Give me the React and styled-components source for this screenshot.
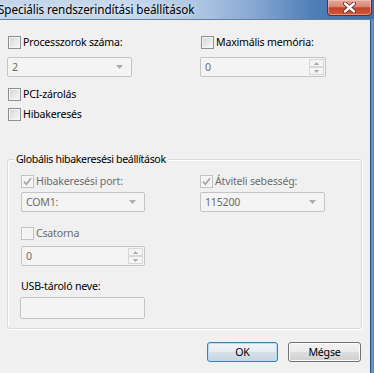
import React from 'react'
import styled, { createGlobalStyle } from 'styled-components'

const GlobalStyle = createGlobalStyle`
  html, body { margin: 0; padding: 0; background: #f0f0f0; }
  body {
    font-family: "Noto Sans", "Open Sans", sans-serif;
    font-size: 10.6px;
    letter-spacing: -0.2px;
    color: #000;
  }
`

const Check = ({ checked, disabled, children, indent }) => (
    <CheckRow $indent={indent} $disabled={disabled}>
        <Box $disabled={disabled}>
            {checked && (
                <svg width="9" height="9" viewBox="0 0 9 9">
                    <path d="M1 4.6 L3.4 7.2 L8 1.2" fill="none" stroke="#a2a2a2" strokeWidth="1.6" />
                </svg>
            )}
        </Box>
        {children}
    </CheckRow>
)

const Combo = ({ value, width }) => (
    <Field $width={width}>
        <span>{value}</span>
        <svg width="7" height="4" viewBox="0 0 7 4">
            <path d="M0 0 H7 L3.5 4 Z" fill="#acacac" />
        </svg>
    </Field>
)

const Spin = ({ value, width }) => (
    <Field $width={width} $spin>
        <span>{value}</span>
        <SpinBtns>
            <SpinBtn>
                <svg width="5" height="3" viewBox="0 0 5 3"><path d="M0 3 H5 L2.5 0 Z" fill="#a8a8a8" /></svg>
            </SpinBtn>
            <SpinBtn>
                <svg width="5" height="3" viewBox="0 0 5 3"><path d="M0 0 H5 L2.5 3 Z" fill="#a8a8a8" /></svg>
            </SpinBtn>
        </SpinBtns>
    </Field>
)

const App = () => {
    return (
        <Window>
            <GlobalStyle />
            <TitleBar>
                <Title>Speciális rendszerindítási beállítások</Title>
                <CloseBtn>
                    <svg width="13" height="11" viewBox="0 0 13 11">
                        <path d="M2 1.5 L11 9.5 M11 1.5 L2 9.5" stroke="#5b2218" strokeWidth="4" strokeLinecap="round" />
                        <path d="M2 1.5 L11 9.5 M11 1.5 L2 9.5" stroke="#ffffff" strokeWidth="2.4" strokeLinecap="round" />
                    </svg>
                </CloseBtn>
            </TitleBar>
            <Body>
                <Client>
                    <Columns>
                        <Col>
                            <Check indent={1}>Processzorok száma:</Check>
                            <Combo value="2" width={125} />
                        </Col>
                        <Col>
                            <Check indent={1}>Maximális memória:</Check>
                            <Spin value="0" width={126} />
                        </Col>
                    </Columns>
                    <Stack>
                        <Check indent={1}>PCI-zárolás</Check>
                        <Check indent={1}>Hibakeresés</Check>
                    </Stack>

                    <Group>
                        <Legend>Globális hibakeresési beállítások</Legend>
                        <GroupColumns>
                            <GroupCol>
                                <Check checked disabled>Hibakeresési port:</Check>
                                <Combo value="COM1:" width={124} />
                            </GroupCol>
                            <GroupCol>
                                <Check checked disabled>Átviteli sebesség:</Check>
                                <Combo value="115200" width={125} />
                            </GroupCol>
                        </GroupColumns>
                        <ChannelBlock>
                            <Check disabled>Csatorna</Check>
                            <Spin value="0" width={124} />
                        </ChannelBlock>
                        <Label>USB-tároló neve:</Label>
                        <TextBox />
                    </Group>

                    <Buttons>
                        <Button $default>OK</Button>
                        <Button>Mégse</Button>
                    </Buttons>
                </Client>
                <Frame />
            </Body>
        </Window>
    )
}

const Window = styled.div`
    width: 374px;
    height: 373px;
    display: flex;
    flex-direction: column;
    overflow: hidden;
    background: #f0f0f0;
`
const TitleBar = styled.div`
    height: 19px;
    flex: none;
    display: flex;
    align-items: flex-start;
    border-bottom: 1px solid #62809f;
    background: linear-gradient(to right, #c3d5ea 0%, #c6d8ec 35%, #a9c3e2 55%, #7fa3d0 70%, #4f7db6 84%, #416fa8 100%);
`
const Title = styled.div`
    flex: 1;
    margin-left: -2px;
    margin-top: 2px;
    font-size: 11.7px;
    letter-spacing: -0.1px;
    line-height: 15px;
    white-space: nowrap;
    text-shadow: 0 0 6px rgba(255, 255, 255, 0.85);
`
const CloseBtn = styled.div`
    width: 45px;
    height: 16px;
    margin-right: 2px;
    box-sizing: border-box;
    border: 1px solid #6e2c22;
    border-top: none;
    border-radius: 0 0 4px 4px;
    background: linear-gradient(#e5a99d 0%, #d98674 45%, #c0422c 52%, #cf5a3c 100%);
    box-shadow: inset 0 0 0 1px rgba(255, 210, 200, 0.45);
    display: flex;
    align-items: center;
    justify-content: center;
`
const Body = styled.div`
    flex: 1;
    display: flex;
`
const Client = styled.div`
    flex: 1;
    display: flex;
    flex-direction: column;
    padding: 15px 0 0 7px;
`
const Frame = styled.div`
    width: 4px;
    flex: none;
    background: linear-gradient(to right, #24507f 0 1px, #5f8fc6 1px, #6b9ad0 3px, #4a79b2 4px);
`
const Columns = styled.div`
    display: grid;
    grid-template-columns: 193px 1fr;
`
const Col = styled.div`
    display: flex;
    flex-direction: column;
    gap: 7px;
`
const Stack = styled.div`
    display: flex;
    flex-direction: column;
    gap: 5px;
    margin-top: 10px;
`
const CheckRow = styled.label`
    display: flex;
    align-items: center;
    gap: 2px;
    height: 15px;
    line-height: 15px;
    padding-left: ${p => p.$indent || 0}px;
    color: ${p => (p.$disabled ? '#6d6d6d' : '#000')};
    white-space: nowrap;
`
const Box = styled.span`
    width: 13px;
    height: 13px;
    box-sizing: border-box;
    flex: none;
    display: flex;
    align-items: center;
    justify-content: center;
    border: 1px solid ${p => (p.$disabled ? '#c2c2c2' : '#8e8f8f')};
    background: ${p => (p.$disabled ? '#f4f4f4' : 'linear-gradient(135deg, #cfd2d6 0%, #e6e7e9 50%, #f7f7f7 100%)')};
    box-shadow: inset 0 0 0 1px ${p => (p.$disabled ? '#f7f7f7' : '#f3f3f3')};
`
const Field = styled.div`
    width: ${p => p.$width}px;
    height: 20px;
    box-sizing: border-box;
    display: flex;
    align-items: center;
    justify-content: space-between;
    padding: 0 ${p => (p.$spin ? 1 : 8)}px 0 4px;
    border: 1px solid #c4c4c4;
    border-radius: 2px;
    background: #f4f4f4;
    color: #6d6d6d;
`
const SpinBtns = styled.div`
    display: flex;
    flex-direction: column;
    height: 16px;
`
const SpinBtn = styled.div`
    width: 15px;
    height: 8px;
    box-sizing: border-box;
    border: 1px solid #d8d8d8;
    background: #f4f4f4;
    display: flex;
    align-items: center;
    justify-content: center;
`
const Group = styled.div`
    width: 355px;
    height: 170px;
    box-sizing: border-box;
    margin-top: 37px;
    border: 1px solid #d5dbe0;
    border-radius: 3px;
    box-shadow: inset 1px 1px 0 #fff, 1px 1px 0 #fff;
    display: flex;
    flex-direction: column;
    padding-left: 13px;
`
const Legend = styled.span`
    align-self: flex-start;
    margin: -8px 0 0 -7px;
    padding: 0 2px;
    height: 15px;
    line-height: 15px;
    background: #f0f0f0;
    white-space: nowrap;
    letter-spacing: -0.35px;
`
const GroupColumns = styled.div`
    display: grid;
    grid-template-columns: 179px 1fr;
    margin-top: 7px;
`
const GroupCol = styled.div`
    display: flex;
    flex-direction: column;
    gap: 3px;
`
const ChannelBlock = styled.div`
    display: flex;
    flex-direction: column;
    gap: 5px;
    margin-top: 14px;
`
const Label = styled.div`
    margin-top: 13px;
    height: 15px;
    line-height: 15px;
`
const TextBox = styled.div`
    width: 125px;
    height: 22px;
    box-sizing: border-box;
    margin: 3px 0 0 -1px;
    border: 1px solid #c4c4c4;
    border-radius: 2px;
    background: #f4f4f4;
`
const Buttons = styled.div`
    display: flex;
    justify-content: flex-end;
    gap: 10px;
    margin-top: 13px;
    padding-right: 9px;
`
const Button = styled.div`
    width: ${p => (p.$default ? 71 : 73)}px;
    height: 20px;
    box-sizing: border-box;
    display: flex;
    align-items: center;
    justify-content: center;
    border: 1px solid ${p => (p.$default ? '#3c7fb1' : '#707070')};
    border-radius: 3px;
    background: ${p => (p.$default
        ? 'linear-gradient(#eef3f7 0%, #e6edf2 50%, #d5e0e8 51%, #c9d6df 100%)'
        : 'linear-gradient(#f2f2f2 0%, #ebebeb 50%, #dddddd 51%, #cfcfcf 100%)')};
    box-shadow: inset 0 0 0 1px ${p => (p.$default ? '#b7dcf2' : '#fcfcfc')};
`
export default App
